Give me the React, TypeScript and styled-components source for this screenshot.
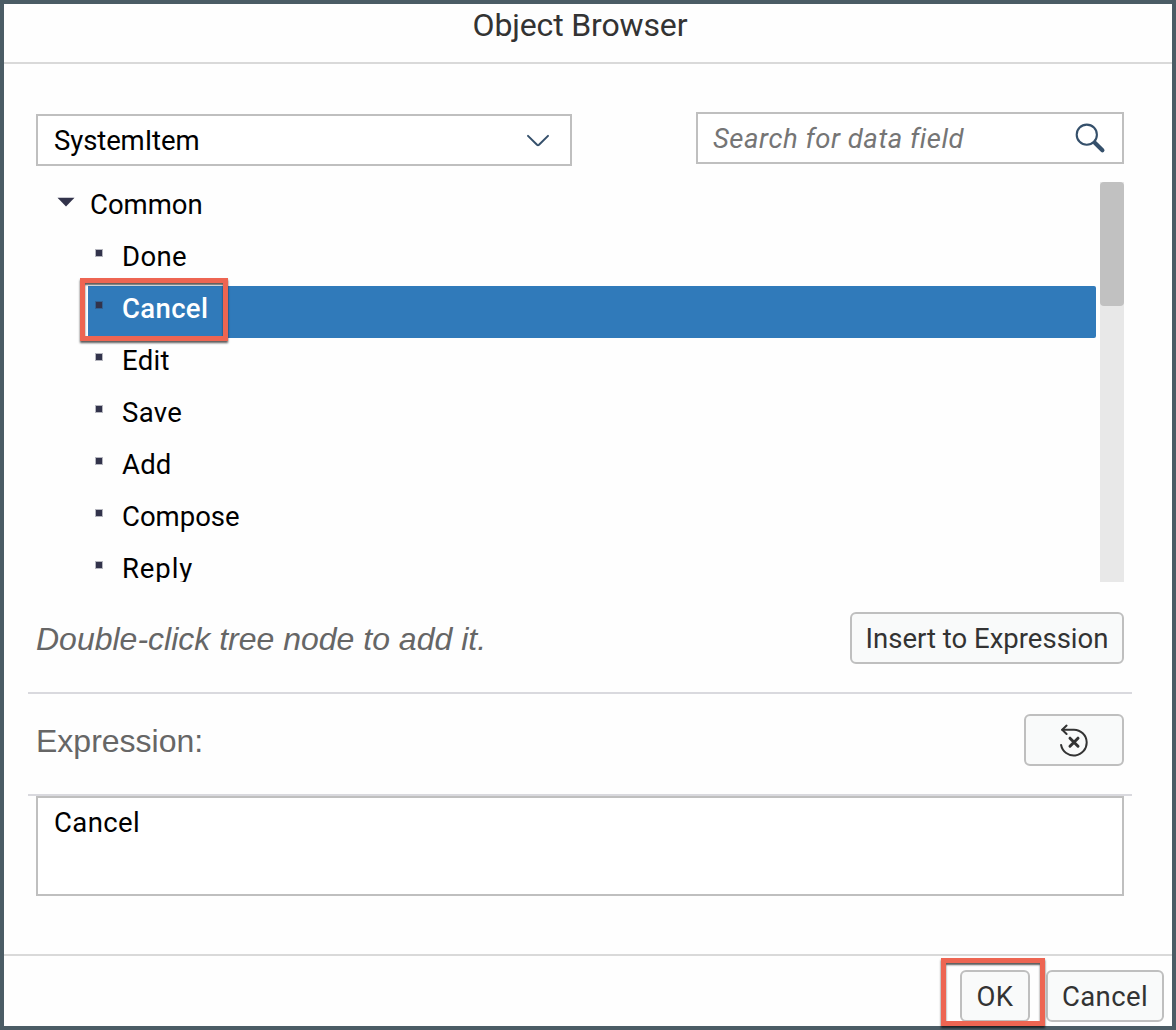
import React, { useState } from "react";
import styled, { createGlobalStyle, css } from "styled-components";

const GlobalStyle = createGlobalStyle`
  * { box-sizing: border-box; }
  html, body { margin: 0; padding: 0; }
  body { background: #fefefe; overflow: hidden; }
`;

const uiFont = `Roboto, "Liberation Sans", sans-serif`;
const fieldBorder = "#bfbfbf";

const Dialog = styled.div`
  width: 1176px;
  height: 1030px;
  display: flex;
  flex-direction: column;
  border: 4px solid #4b5c65;
  background: #fefefe;
  font-family: ${uiFont};
  font-size: 27.5px;
  color: #000;
`;

const Header = styled.header`
  height: 60px;
  flex: none;
  display: flex;
  justify-content: center;
  padding-right: 16px;
  border-bottom: 2px solid #d9d9d9;
`;

const Text = styled.span<{ $spacing?: number }>`
  display: block;
  white-space: pre;
  letter-spacing: ${(p) => p.$spacing ?? 0}px;
`;

const Title = styled(Text)`
  font-size: 32px;
  line-height: 42px;
  color: #333;
`;

const Body = styled.main`
  flex: 1;
  display: flex;
  flex-direction: column;
  padding: 48px 48px 0 32px;
`;

const Filters = styled.div`
  display: flex;
  justify-content: space-between;
  align-items: flex-start;
  height: 70px;
  flex: none;
`;

const Field = styled.div`
  height: 52px;
  display: flex;
  align-items: center;
  justify-content: space-between;
  border: 2px solid ${fieldBorder};
  background: #fff;
`;

const Select = styled(Field)`
  width: 536px;
  margin-top: 2px;
  padding: 0 20px 0 16px;
`;

const SearchField = styled(Field)`
  width: 428px;
  padding: 0 16px 0 15px;
  color: #757575;
  font-style: italic;
`;

const TreePane = styled.div`
  height: 400px;
  flex: none;
  display: flex;
  justify-content: space-between;
`;

const Tree = styled.div`
  width: 1060px;
  height: 400px;
  overflow: hidden;
`;

const TreeRow = styled.div<{ $level: number; $selected?: boolean }>`
  height: 52px;
  display: flex;
  align-items: flex-start;
  line-height: 46px;
  margin-left: ${(p) => (p.$level === 0 ? 20 : 52)}px;
  ${(p) =>
    p.$selected &&
    css`
      background: #307aba;
      color: #fff;
      font-weight: 500;
      border-radius: 0 2px 2px 0;
    `}
`;

const Marker = styled.span`
  flex: none;
  width: 34px;
  height: 52px;
`;

const Arrow = styled.svg`
  display: block;
  margin: 15px 0 0 1px;
`;

const Bullet = styled.i`
  display: block;
  width: 8px;
  height: 8px;
  margin: 15px 0 0 7px;
  border: 1px solid rgba(50, 51, 75, 0.35);
  background: #32334b;
  background-clip: padding-box;
`;

const Scrollbar = styled.div`
  width: 24px;
  height: 400px;
  background: #e8e8e8;
`;

const Thumb = styled.div`
  height: 124px;
  border-radius: 4px;
  background: #c1c1c1;
`;

const ActionRow = styled.div<{ $height: number; $top: number }>`
  flex: none;
  height: ${(p) => p.$height}px;
  padding: ${(p) => p.$top}px 8px 0;
  margin: 0 -8px;
  display: flex;
  justify-content: space-between;
  align-items: flex-start;
  border-bottom: 2px solid #d9d9de;
`;

const Caption = styled(Text)<{ $italic?: boolean }>`
  font-family: "Liberation Sans", Arial, sans-serif;
  font-size: 32px;
  line-height: 54px;
  color: #666;
  font-style: ${(p) => (p.$italic ? "italic" : "normal")};
`;

const Button = styled.button<{ $width: number }>`
  width: ${(p) => p.$width}px;
  height: 52px;
  padding: 0;
  display: flex;
  align-items: center;
  justify-content: center;
  border: 2px solid ${fieldBorder};
  border-radius: 6px;
  background: #f9fafa;
  color: #333;
  font: inherit;
`;

const Expression = styled.div`
  height: 100px;
  flex: none;
  padding: 6px 16px;
  border: 2px solid ${fieldBorder};
  background: #fff;
  line-height: 38px;
`;

const Footer = styled.footer`
  flex: none;
  height: 72px;
  display: flex;
  gap: 16px;
  justify-content: flex-end;
  padding: 14px 8px 0 0;
  border-top: 2px solid #d9d9d9;
`;

const Anchor = styled.div`
  position: relative;
  height: 52px;
`;

const Callout = styled.div<{ $x: number; $y: number; $w: number; $h: number }>`
  position: absolute;
  left: ${(p) => p.$x}px;
  top: ${(p) => p.$y}px;
  width: ${(p) => p.$w}px;
  height: ${(p) => p.$h}px;
  border: 5px solid #ed6552;
  box-shadow: 0 2px 2px rgba(0, 0, 0, 0.65), inset 0 2px 2px rgba(0, 0, 0, 0.65);
  pointer-events: none;
  z-index: 2;
`;

const Overlay = styled.div`
  position: relative;
  height: 0;
`;

const nodes = [
  { label: "Done", spacing: 0.4 },
  { label: "Cancel", spacing: 0.35 },
  { label: "Edit", spacing: 0.3 },
  { label: "Save", spacing: 0.35 },
  { label: "Add", spacing: 0.2 },
  { label: "Compose", spacing: 0 },
  { label: "Reply", spacing: 0.9 },
];

function ChevronIcon() {
  return (
    <svg width="24" height="14" viewBox="0 0 24 14" fill="none" stroke="#35506b" strokeWidth="2" strokeLinecap="round" strokeLinejoin="round">
      <path d="M2 2.9 L11 11.8 Q12 12.6 13 11.8 L22 2.9" />
    </svg>
  );
}

function SearchIcon() {
  return (
    <svg width="32" height="32" viewBox="0 0 32 32" fill="none" stroke="#35506b">
      <circle cx="12.8" cy="12.7" r="10.1" strokeWidth="2.1" />
      <path d="M20.8 20.8 L28.4 28.2" strokeWidth="4.2" strokeLinecap="round" />
    </svg>
  );
}

function ResetIcon() {
  return (
    <svg width="32" height="34" viewBox="0 0 32 34" fill="none" stroke="#333" strokeLinecap="round">
      <path d="M4.2 6.7 H16 A12.9 12.9 0 1 1 3.1 22" strokeWidth="2" />
      <path d="M8.6 2.6 L4.2 6.7 L8.6 11" strokeWidth="2" strokeLinejoin="round" />
      <path d="M12 15.2 L20 23.2 M20 15.2 L12 23.2" strokeWidth="3" />
    </svg>
  );
}

export default function App() {
  const [selected, setSelected] = useState("Cancel");
  return (
    <>
      <GlobalStyle />
      <Dialog>
        <Header>
          <Title $spacing={-0.15}>Object Browser</Title>
        </Header>
        <Body>
          <Filters>
            <Select>
              <Text $spacing={-0.1}>SystemItem</Text>
              <ChevronIcon />
            </Select>
            <SearchField>
              <Text $spacing={0.53}>Search for data field</Text>
              <SearchIcon />
            </SearchField>
          </Filters>
          <Overlay>
            <Callout $x={44} $y={96} $w={148} $h={63} />
          </Overlay>
          <TreePane>
            <Tree>
              <TreeRow $level={0}>
                <Marker>
                  <Arrow width="18" height="10" viewBox="0 0 18 10">
                    <path d="M0.5 0.8 H17.5 L9 9.5 Z" fill="#32334b" />
                  </Arrow>
                </Marker>
                <Text>Common</Text>
              </TreeRow>
              {nodes.map((n) => (
                <TreeRow key={n.label} $level={1} $selected={n.label === selected} onClick={() => setSelected(n.label)}>
                  <Marker>
                    <Bullet />
                  </Marker>
                  <Text $spacing={n.spacing}>{n.label}</Text>
                </TreeRow>
              ))}
            </Tree>
            <Scrollbar>
              <Thumb />
            </Scrollbar>
          </TreePane>
          <ActionRow $height={112} $top={30}>
            <Caption $italic>Double-click tree node to add it.</Caption>
            <Button $width={274}>
              <Text>Insert to Expression</Text>
            </Button>
          </ActionRow>
          <ActionRow $height={102} $top={20}>
            <Caption>Expression:</Caption>
            <Button $width={100} aria-label="Clear">
              <ResetIcon />
            </Button>
          </ActionRow>
          <Expression>
            <Text $spacing={0.4}>Cancel</Text>
          </Expression>
        </Body>
        <Footer>
          <Anchor>
            <Button $width={70}>
              <Text $spacing={0.5}>OK</Text>
            </Button>
            <Callout $x={-19} $y={-12} $w={104} $h={68} />
          </Anchor>
          <Button $width={118}>
            <Text $spacing={0.4}>Cancel</Text>
          </Button>
        </Footer>
      </Dialog>
    </>
  );
}
